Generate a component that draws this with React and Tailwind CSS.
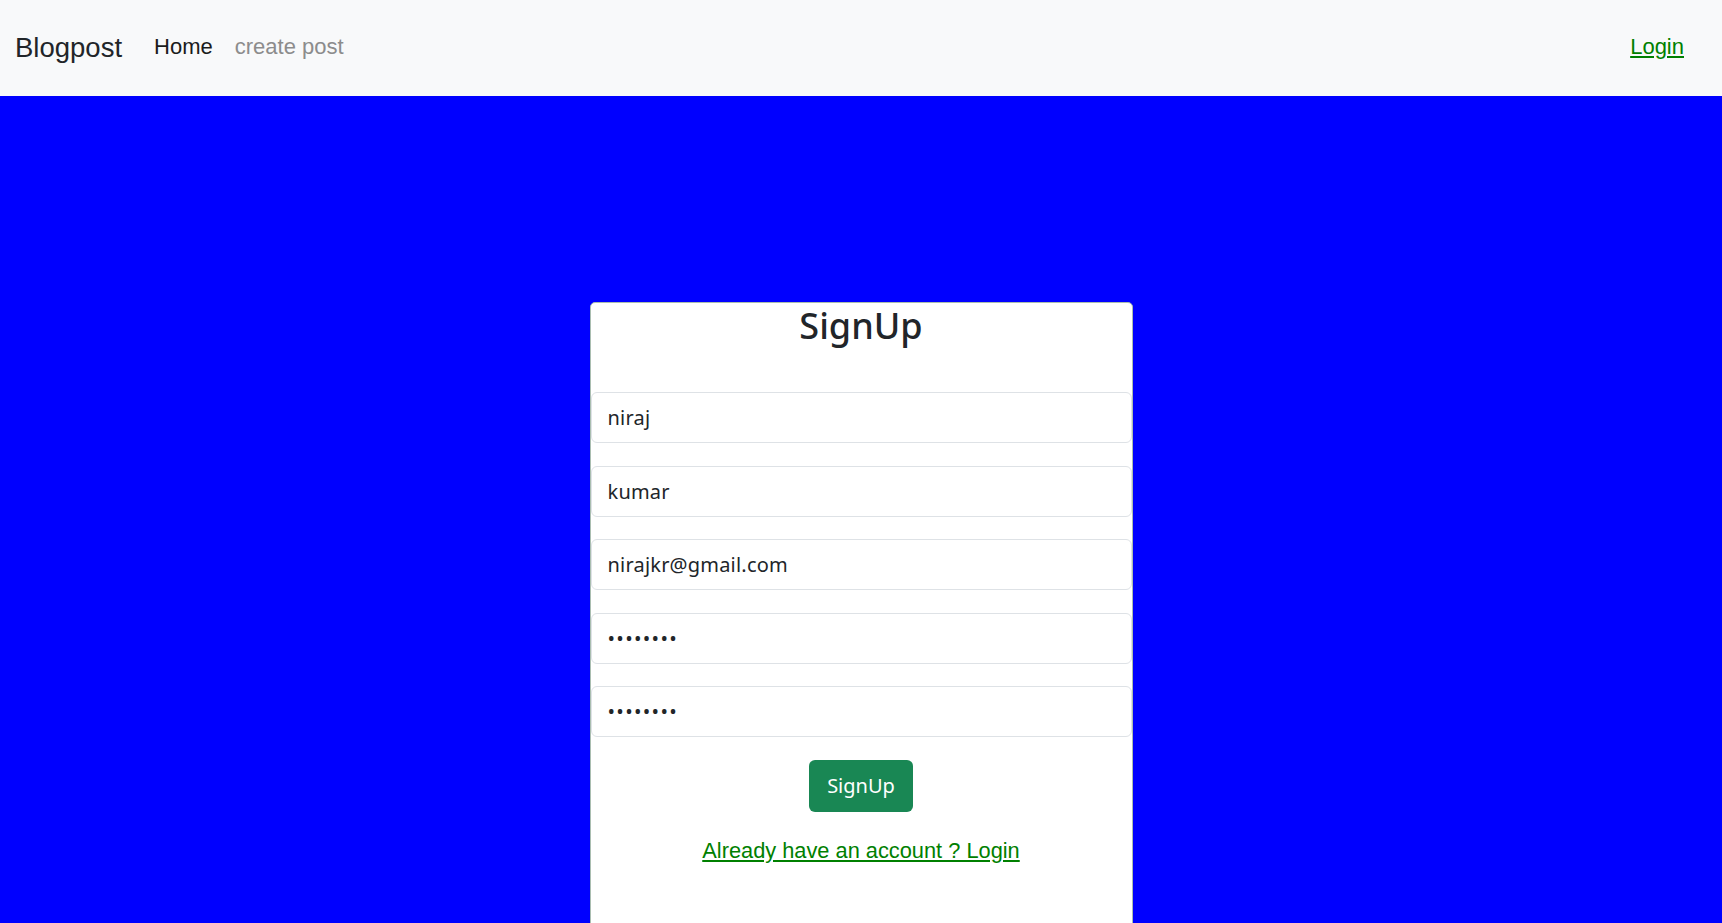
import { useState } from 'react'

const fields = [
  { type: 'text', value: 'niraj' },
  { type: 'text', value: 'kumar' },
  { type: 'email', value: 'nirajkr@gmail.com' },
  { type: 'password', value: '12345678' },
  { type: 'password', value: '12345678' },
]

function Navbar(){
  return (
    <nav className="h-[96px] bg-[#f8f9fa] flex items-center justify-between pl-[15px] pr-[38px] font-['Liberation_Sans',Arial,sans-serif]">
      <div className="flex items-center">
        <a className="text-[27.5px] text-[#212529] leading-tight">Blogpost</a>
        <div className="flex items-center gap-[22px] ml-[32px] pb-[3px]">
          <a className="text-[22px] text-[#1b1b1b] leading-normal">Home</a>
          <a className="text-[22px] text-[#8c8c8c] leading-normal">create post</a>
        </div>
      </div>
      <a href="#" className="text-[22px] text-[#008000] underline leading-normal pb-[3px]">Login</a>
    </nav>
  )
}

export default function App(){
  const [vals, setVals] = useState(fields.map(f => f.value))

  return (
    <div className="h-screen overflow-hidden bg-[#0000ff]">
      <Navbar />
      <div className="w-[543px] mx-auto mt-[206px] h-[700px] bg-white border border-[#a9bdb0] rounded-[5px] font-['Noto_Sans',sans-serif]">
        <h1 className="text-[36px] font-medium leading-[1.2] text-center text-[#212529] mt-[1px]">SignUp</h1>
        <form className="mt-[45px] flex flex-col gap-[22.5px]" onSubmit={(e)=>e.preventDefault()}>
          {fields.map((f, i) => (
            <input
              key={i}
              type={f.type}
              value={vals[i]}
              onChange={(e)=>setVals(v => v.map((x, j) => j===i ? e.target.value : x))}
              className={f.type === 'password'
                ? "h-[51px] w-full border border-[#dee2e6] rounded-[6px] px-[16px] text-[20px] text-[#212529] outline-none tracking-[1.3px]"
                : "h-[51px] w-full border border-[#dee2e6] rounded-[6px] px-[16px] text-[20px] text-[#212529] outline-none tracking-[0.2px]"}
            />
          ))}
          <div className="flex justify-center">
            <button className="bg-[#198754] text-white text-[20px] leading-[1.5] px-[18px] py-[11px] rounded-[6px]">SignUp</button>
          </div>
        </form>
        <div className="text-center mt-[23px] font-['Liberation_Sans',Arial,sans-serif]">
          <a href="#" className="text-[21.8px] leading-[1.5] text-[#008000] underline">Already have an account ? Login</a>
        </div>
      </div>
    </div>
  )
}
